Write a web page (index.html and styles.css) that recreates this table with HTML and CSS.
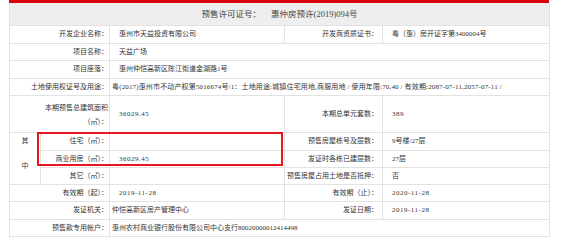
FILE: index.html
```html
<!DOCTYPE html>
<html lang="zh-CN">
<head>
<meta charset="utf-8">
<title>预售许可证</title>
<link rel="stylesheet" href="styles.css">
</head>
<body>
<div class="wrap">
  <table class="permit">
    <colgroup>
      <col class="c-side">
      <col class="c-label">
      <col class="c-value">
      <col class="c-label2">
      <col class="c-value2">
    </colgroup>
    <tr class="head">
      <td colspan="5"><span class="head-label">预售许可证号：</span><span class="head-value">惠仲房预许(2019)094号</span></td>
    </tr>
    <tr class="r18">
      <td colspan="2" class="lbl">开发企业名称：</td>
      <td class="val">惠州市天益投资有限公司</td>
      <td class="lbl2">开发商资质证书：</td>
      <td class="val2">粤（惠）房开证字第3400004号</td>
    </tr>
    <tr class="r17">
      <td colspan="2" class="lbl">项目名称：</td>
      <td colspan="3" class="val">天益广场</td>
    </tr>
    <tr class="r18">
      <td colspan="2" class="lbl">项目座落：</td>
      <td colspan="3" class="val">惠州仲恺高新区陈江街道金湖路1号</td>
    </tr>
    <tr class="r17">
      <td colspan="2" class="lbl">土地使用权证号及用途：</td>
      <td colspan="3" class="val tight land">粤(2017)惠州市不动产权第5016674号/1：土地用途:城镇住宅用地,商服用地 / 使用年限:70,40 / 有效期:2087-07-11,2057-07-11 /</td>
    </tr>
    <tr class="r35">
      <td colspan="2" class="lbl wrapl">本期预售总建筑面积<br>（㎡）：</td>
      <td class="val num">36029.45</td>
      <td class="lbl2">本期总单元套数：</td>
      <td class="val2 num">389</td>
    </tr>
    <tr class="r18">
      <td rowspan="3" class="side"><span>其</span><span>中</span></td>
      <td class="lbl">住宅（㎡）：</td>
      <td class="val"></td>
      <td class="lbl2">预售房屋栋号及层数：</td>
      <td class="val2">9号楼/27层</td>
    </tr>
    <tr class="r17">
      <td class="lbl">商业用房（㎡）：</td>
      <td class="val num">36029.45</td>
      <td class="lbl2">发证时各栋已建层数：</td>
      <td class="val2">27层</td>
    </tr>
    <tr class="r17">
      <td class="lbl">其它（㎡）：</td>
      <td class="val"></td>
      <td class="lbl2">预售房屋占用土地是否抵押：</td>
      <td class="val2">否</td>
    </tr>
    <tr class="r17">
      <td colspan="2" class="lbl">有效期（起）：</td>
      <td class="val num">2019-11-28</td>
      <td class="lbl2">有效期（止）：</td>
      <td class="val2 num">2020-11-28</td>
    </tr>
    <tr class="r18">
      <td colspan="2" class="lbl">发证机关：</td>
      <td class="val tight">仲恺高新区房产管理中心</td>
      <td class="lbl2">发证日期：</td>
      <td class="val2 num">2019-11-28</td>
    </tr>
    <tr class="r17">
      <td colspan="2" class="lbl">预售款专用帐户：</td>
      <td colspan="3" class="val tight">惠州农村商业银行股份有限公司中心支行80020000012414498</td>
    </tr>
  </table>
  <div class="highlight"></div>
</div>
</body>
</html>
```

FILE: styles.css
```css
html, body {
  margin: 0;
  padding: 0;
  background: #fff;
}

body {
  font-family: "Liberation Serif", "Noto Sans CJK SC", serif;
  color: #333;
}

.wrap {
  position: relative;
  width: 540px;
  margin-left: 9px;
  border-top: 3px solid #d8000e;
}

.permit {
  width: 540px;
  border-collapse: collapse;
  table-layout: fixed;
  font-size: 7px;
}

.c-side { width: 31px; }
.c-label { width: 69px; }
.c-value { width: 175px; }
.c-label2 { width: 98px; }
.c-value2 { width: 167px; }

.permit td {
  border: 1px solid #e2e2e2;
  padding: 0;
  line-height: 9px;
  white-space: nowrap;
  overflow: hidden;
}

.permit tr:first-child td {
  border-top: 0;
}

.head td {
  height: 22px;
  background: #eeeeee;
  text-align: center;
  font-size: 8.5px;
  color: #444;
}

.head-label {
  margin-right: 10px;
}

.r17 td { height: 16px; }
.r18 td { height: 17px; }
.r35 td { height: 34px; }

.lbl {
  text-align: right;
  padding-right: 1px !important;
}

.lbl2 {
  text-align: right;
  padding-right: 4px !important;
}

.val {
  padding-left: 9px !important;
}

.val.tight {
  padding-left: 2px !important;
}

.val2 {
  padding-left: 9px !important;
}

.num {
  letter-spacing: 0.5px;
}

.land {
  letter-spacing: 0.15px;
}

.wrapl {
  line-height: 14px !important;
  padding-top: 2px !important;
}

.side {
  text-align: center;
  padding-bottom: 9px !important;
}

.side span {
  display: block;
  line-height: 9px;
}

.side span + span {
  margin-top: 16px;
}

.highlight {
  position: absolute;
  left: 28px;
  top: 129px;
  width: 242px;
  height: 30px;
  border: 2px solid #e8161e;
  pointer-events: none;
}
```
